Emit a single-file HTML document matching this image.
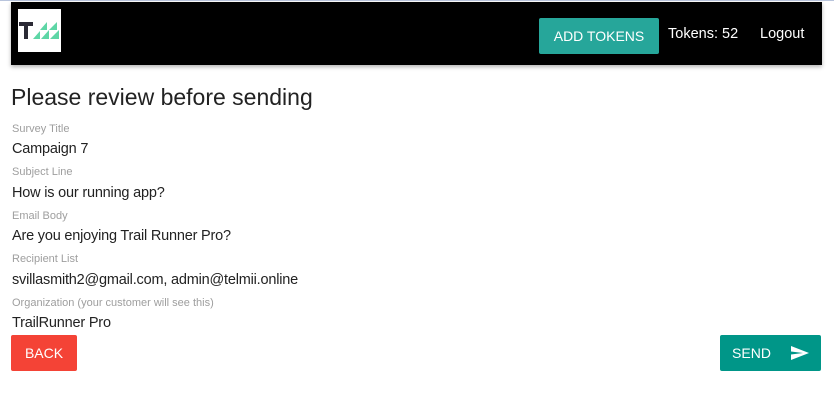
<!DOCTYPE html>
<html><head><style>
body{margin:0;width:834px;height:417px;background:#fff;font-family:"Liberation Sans",sans-serif;position:relative;overflow:hidden;border-top:1px solid #b8c4dc;box-sizing:border-box}
.nav{position:absolute;left:11px;top:1px;width:811px;height:63px;background:#000;box-shadow:0 2px 4px rgba(0,0,0,.3)}
.logo{position:absolute;left:7px;top:7px;width:43px;height:43px;background:#fff}
.btn{position:absolute;color:#fff;font-size:14px;display:flex;align-items:center;justify-content:center;border-radius:2px}
.lbl{position:absolute;left:12px;font-size:11px;color:#9e9e9e}
.val{position:absolute;left:12px;font-size:14.5px;color:#222;letter-spacing:-0.2px}
</style></head><body>
<div class="nav">
 <div class="logo"><svg width="43" height="43" viewBox="0 0 43 43">
  <rect x="1" y="13" width="14" height="4" fill="#2b2a35"/><rect x="6" y="13" width="4" height="17" fill="#2b2a35"/>
  <polygon points="15,30 22,22 22,30" fill="#5ed6a6"/><polygon points="23,30 31,21 31,30" fill="#5ed6a6"/><polygon points="32,30 41,21 41,30" fill="#5ed6a6"/>
  <polygon points="22,21 29,13 29,21" fill="#5ed6a6"/><polygon points="31,21 39,13 39,21" fill="#5ed6a6"/>
 </svg></div>
 <div class="btn" style="left:528px;top:16px;width:120px;height:36px;background:#26a69a">ADD TOKENS</div>
 <div style="position:absolute;left:657px;top:24px;color:#fff;font-size:14.5px">Tokens: 52</div>
 <div style="position:absolute;left:749px;top:24px;color:#fff;font-size:14.5px">Logout</div>
</div>
<div style="position:absolute;left:11px;top:83px;font-size:23px;color:#222">Please review before sending</div>
<div class="lbl" style="top:122px">Survey Title</div><div class="val" style="top:140px">Campaign 7</div>
<div class="lbl" style="top:165px">Subject Line</div><div class="val" style="top:184px">How is our running app?</div>
<div class="lbl" style="top:209px">Email Body</div><div class="val" style="top:227px">Are you enjoying Trail Runner Pro?</div>
<div class="lbl" style="top:252px">Recipient List</div><div class="val" style="top:271px">svillasmith2@gmail.com, admin@telmii.online</div>
<div class="lbl" style="top:296px">Organization (your customer will see this)</div><div class="val" style="top:314px">TrailRunner Pro</div>
<div class="btn" style="left:11px;top:334px;width:66px;height:36px;background:#f44336">BACK</div>
<div class="btn" style="left:720px;top:334px;width:101px;height:36px;background:#009688"><span style="margin-right:20px">SEND</span><svg width="18" height="14" viewBox="0 0 18 14"><polygon points="0,0 18,7 0,14 0,8.5 12,7 0,5.5" fill="#fff"/></svg></div>
</body></html>
